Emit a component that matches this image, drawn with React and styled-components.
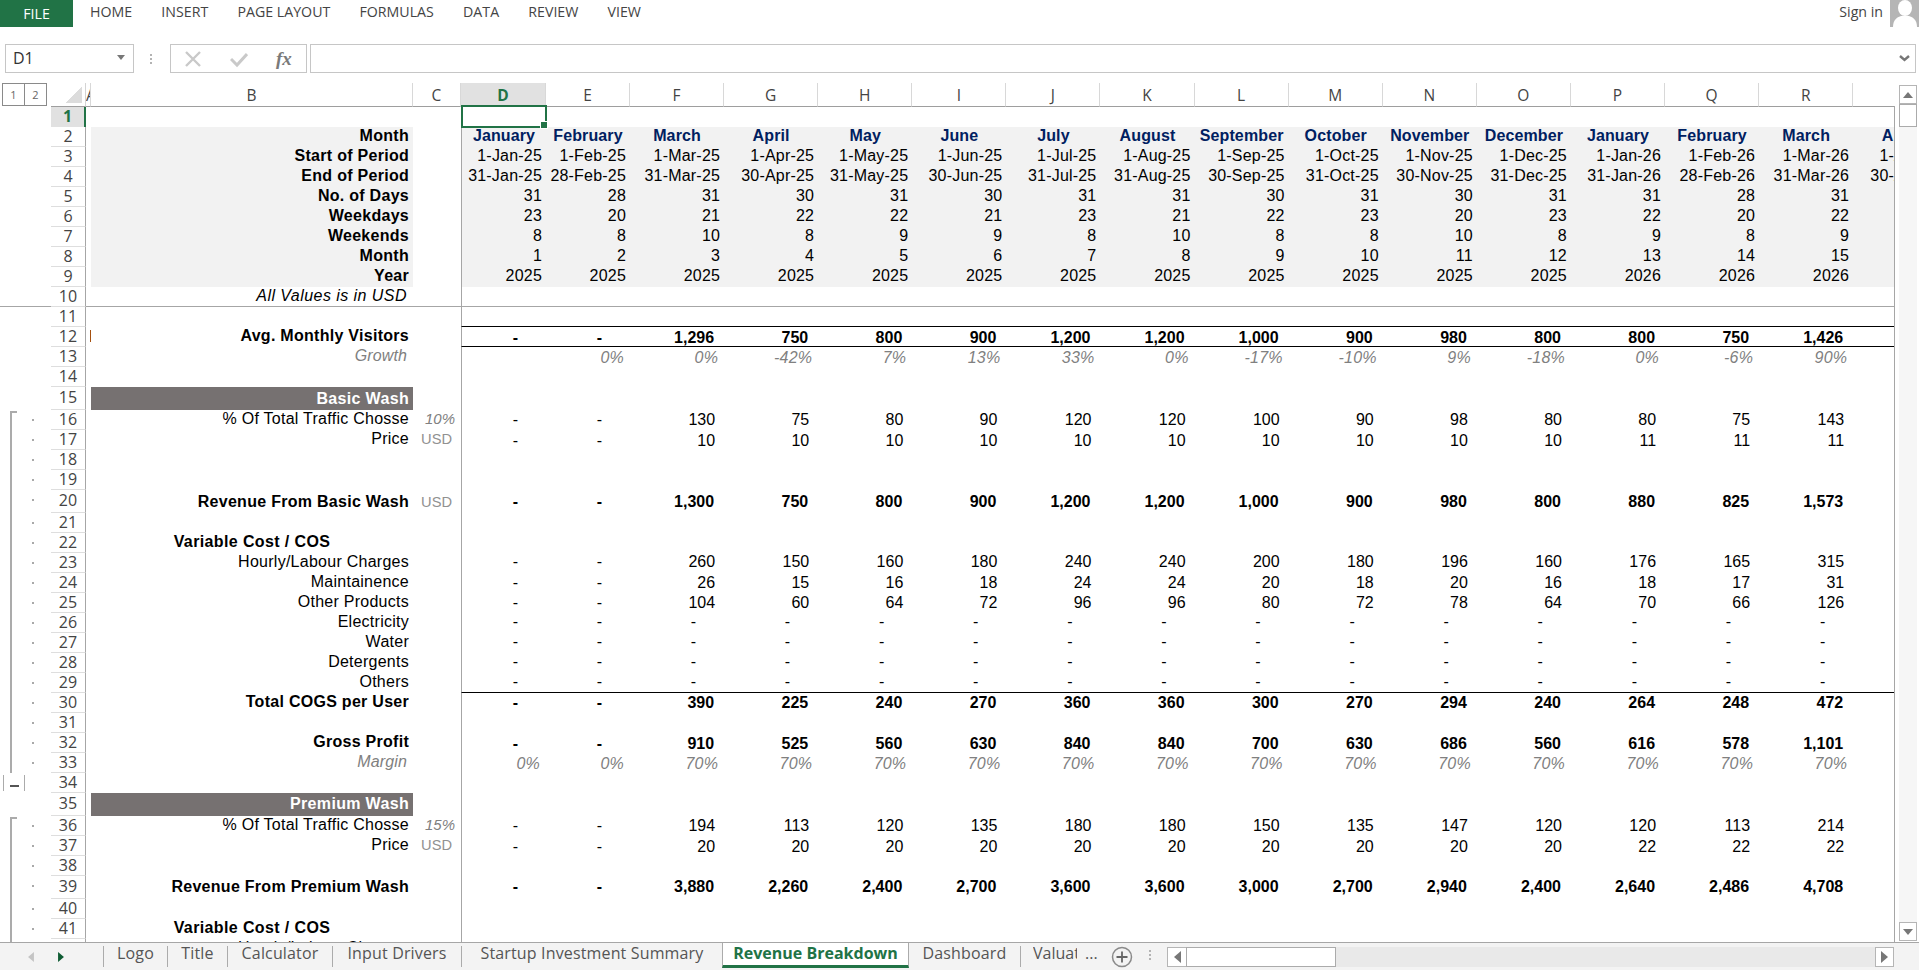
import React from 'react';
import styled, { createGlobalStyle, css } from 'styled-components';

const GlobalStyle = createGlobalStyle`
  html, body {
    margin: 0;
    padding: 0;
    height: 100%;
    background: #fff;
    overflow: hidden;
  }
  * {
    box-sizing: border-box;
  }
`;

const uiFont = `"Open Sans", "Noto Sans", sans-serif`;
const cellFont = `"Liberation Sans", Arial, sans-serif`;
const green = '#217346';
const lineGrey = '#a6a6a6';

const Page = styled.div`
  width: 1919px;
  height: 970px;
  display: flex;
  flex-direction: column;
  background: #fff;
  overflow: hidden;
`;

/* ribbon tabs */
const MenuBar = styled.div`
  height: 27px;
  display: flex;
  align-items: flex-start;
  font-family: ${uiFont};
  font-size: 14.2px;
  color: #444;
`;

const FileTab = styled.div`
  width: 73px;
  height: 27px;
  background: ${green};
  color: #fff;
  display: flex;
  align-items: center;
  justify-content: center;
  margin-right: 17px;
`;

const MenuItem = styled.div`
  line-height: 24px;
  margin-right: 29.2px;
`;

const SignIn = styled.div`
  margin-left: auto;
  display: flex;
  align-items: flex-start;
  gap: 7px;
  line-height: 24px;
`;

const Avatar = styled.svg`
  width: 29px;
  height: 27px;
  display: block;
`;

/* name box + formula bar */
const FormulaRow = styled.div`
  height: 29px;
  margin: 17px 3px 10px 5px;
  display: flex;
`;

const NameBox = styled.div`
  width: 129px;
  border: 1px solid #c6c6c6;
  display: flex;
  align-items: center;
  justify-content: space-between;
  padding: 0 8px 2px 7px;
  font-family: ${uiFont};
  font-size: 16px;
  color: #333;
`;

const Caret = styled.svg`
  width: 8px;
  height: 5px;
  display: block;
`;

const GripDots = styled.div`
  width: 3px;
  display: flex;
  flex-direction: column;
  justify-content: center;
  gap: 2px;
  margin: ${(p) => p.$margin};
  i {
    width: 2px;
    height: 2px;
    background: #b3b3b3;
    display: block;
  }
`;

const FormulaButtons = styled.div`
  width: 137px;
  border: 1px solid #c6c6c6;
  display: flex;
  align-items: center;
  padding-left: 13px;
`;

const BarIcon = styled.svg`
  width: 18px;
  height: 18px;
  margin-right: 28px;
  display: block;
`;

const FxLabel = styled.span`
  font-family: "Liberation Serif", serif;
  font-style: italic;
  font-weight: bold;
  font-size: 19px;
  color: #7a7a7a;
  line-height: 1;
`;

const FormulaInput = styled.div`
  flex: 1;
  margin-left: 3px;
  border: 1px solid #c6c6c6;
  display: flex;
  align-items: center;
  justify-content: flex-end;
  padding-right: 5px;
`;

/* sheet */
const SheetArea = styled.div`
  flex: 1;
  min-height: 0;
  display: flex;
`;

const GridPane = styled.div`
  width: 1895px;
  position: relative;
  overflow: hidden;
  &::after {
    content: '';
    position: absolute;
    top: 23px;
    right: 0;
    bottom: 0;
    width: 1px;
    background: ${lineGrey};
  }
`;

const trackSizes = '51px 35px 5px 322px 48px 85px 84px repeat(15, 94.1px)';

const HeaderRow = styled.div`
  display: grid;
  grid-template-columns: ${trackSizes};
  height: 24px;
  width: max-content;
  font-family: ${uiFont};
  font-size: 15.5px;
  color: #444;
`;

const OutlineLevels = styled.div`
  display: flex;
  padding: 0 0 1px 2px;
`;

const LevelButton = styled.div`
  width: 23px;
  height: 23px;
  border: 1px solid #8a8a8a;
  margin-right: -1px;
  display: flex;
  align-items: center;
  justify-content: center;
  font-size: 11px;
  color: #666;
`;

const Corner = styled.div`
  border-bottom: 1px solid #9e9e9e;
  border-right: 1px solid #d4d4d4;
  display: flex;
  align-items: flex-end;
  justify-content: flex-end;
  padding: 0 3px 3px 0;
`;

const CornerMark = styled.div`
  width: 16px;
  height: 16px;
  background: linear-gradient(135deg, transparent 50%, #dcdcdc 50%);
`;

const ColHead = styled.div`
  border-bottom: 1px solid #9e9e9e;
  border-right: 1px solid #d8d8d8;
  display: flex;
  align-items: center;
  justify-content: ${(p) => (p.$clip ? 'flex-start' : 'center')};
  overflow: hidden;
  ${(p) =>
    p.$active &&
    css`
      background: #e1e1e1;
      color: ${green};
      font-weight: 700;
    `}
`;

const Row = styled.div`
  display: grid;
  grid-template-columns: ${trackSizes};
  width: max-content;
  height: ${(p) => p.$h}px;
  font-family: ${cellFont};
  font-size: 16px;
  line-height: 16px;
  color: #000;
  ${(p) => p.$freeze && `border-bottom: 1px solid ${lineGrey};`}
`;

const Gutter = styled.div`
  display: flex;
  height: ${(p) => p.$h}px;
`;

const Bracket = styled.div`
  width: 7px;
  margin-left: 10px;
  border-left: 2px solid #ababab;
  ${(p) => p.$start && `border-top: 2px solid #ababab; margin-top: 1px;`}
`;

const OutlineDot = styled.div`
  width: 2px;
  height: 2px;
  background: #a9a9a9;
  margin: 9px 0 0 15px;
`;

const Collapse = styled.div`
  width: 22px;
  height: 16px;
  margin: 2px 0 0 3px;
  border-left: 1px solid #ababab;
  border-right: 1px solid #ababab;
  display: flex;
  align-items: flex-end;
  justify-content: center;
  padding-bottom: 4px;
  i {
    width: 9px;
    height: 2px;
    background: #555;
    display: block;
  }
`;

const RowNum = styled.div`
  font-family: ${uiFont};
  font-size: 16px;
  color: #444;
  border-right: 1px solid ${lineGrey};
  border-bottom: 1px solid #dedede;
  display: flex;
  align-items: center;
  justify-content: center;
  padding-bottom: 2px;
  ${(p) =>
    p.$active &&
    css`
      background: #e1e1e1;
      color: ${green};
      font-weight: 700;
      border-right: 2px solid ${green};
      border-bottom: none;
    `}
`;

const ColA = styled.div`
  display: flex;
  align-items: flex-start;
  justify-content: flex-end;
  padding: 3px 0 0 0;
`;

const Tick = styled.div`
  width: 1px;
  height: 12px;
  background: #a5500f;
`;

const labelVariants = {
  bold: css`
    font-weight: 700;
    letter-spacing: 0.28px;
    text-align: right;
    padding-right: 4px;
  `,
  center: css`
    font-weight: 700;
    letter-spacing: 0.38px;
    text-align: center;
  `,
  plain: css`
    letter-spacing: 0.26px;
    text-align: right;
    padding-right: 4px;
  `,
  note: css`
    font-style: italic;
    letter-spacing: 0.45px;
    text-align: right;
    padding-right: 6px;
  `,
  muted: css`
    font-style: italic;
    letter-spacing: 0.12px;
    color: #808080;
    text-align: right;
    padding-right: 6px;
  `,
  band: css`
    font-weight: 700;
    letter-spacing: 0.33px;
    color: #fff;
    background: #767171;
    text-align: right;
    padding-right: 4px;
  `,
};

const Label = styled.div`
  ${(p) => labelVariants[p.$kind || 'plain']}
  ${(p) => p.$panel && 'background: #f2f2f2;'}
  padding-top: ${(p) => p.$pad}px;
  white-space: nowrap;
`;

const Unit = styled.div`
  color: ${(p) => (p.$pct ? '#808080' : '#919191')};
  font-style: ${(p) => (p.$pct ? 'italic' : 'normal')};
  font-size: ${(p) => (p.$pct ? 15 : 14.67)}px;
  text-align: right;
  padding-right: ${(p) => (p.$pct ? 6 : 9)}px;
  padding-top: ${(p) => p.$pad}px;
`;

const valueVariants = {
  month: css`
    font-weight: 700;
    letter-spacing: 0.12px;
    color: #002060;
    text-align: center;
  `,
  plain: css`
    letter-spacing: 0.2px;
    text-align: right;
    padding-right: 4px;
  `,
  num: css`
    text-align: right;
    padding-right: 9px;
  `,
  bold: css`
    font-weight: 700;
    text-align: right;
    padding-right: 10px;
  `,
  pct: css`
    font-style: italic;
    letter-spacing: 0.2px;
    color: #808080;
    text-align: right;
    padding-right: 6px;
  `,
};

const Value = styled.div`
  ${(p) => valueVariants[p.$kind || 'plain']}
  ${(p) => p.$dash && 'padding-right: 28px;'}
  ${(p) => p.$panel && 'background: #f2f2f2;'}
  ${(p) => p.$rule && 'border-bottom: 1px solid #000;'}
  ${(p) => p.$first && `border-left: 1px solid ${lineGrey};`}
  padding-top: ${(p) => p.$pad}px;
  white-space: nowrap;
  overflow: hidden;
  position: relative;
  ${(p) => p.$selected && 'overflow: visible; z-index: 2;'}
`;

const Selection = styled.div`
  position: absolute;
  top: -2px;
  left: -1px;
  right: -1px;
  bottom: -1px;
  border: 2px solid ${green};
  &::after {
    content: '';
    position: absolute;
    right: -3px;
    bottom: -3px;
    width: 6px;
    height: 6px;
    background: ${green};
    border: 1px solid #fff;
  }
`;

/* scrollbars */
const VScroll = styled.div`
  flex: 1;
  display: flex;
  flex-direction: column;
  padding: 2px 2px 1px 4px;
  background: #fff;
`;

const VTrack = styled.div`
  flex: 1;
  display: flex;
  flex-direction: column;
  background: #f6f6f6;
`;

const ScrollBtn = styled.div`
  width: ${(p) => p.$w || 18}px;
  height: ${(p) => p.$h || 19}px;
  flex: none;
  background: #fff;
  border: 1px solid #b5b5b5;
  display: flex;
  align-items: center;
  justify-content: center;
  ${(p) => p.$end && 'margin-top: auto;'}
  ${(p) => p.$gapRight && 'margin-left: auto;'}
`;

const VThumb = styled.div`
  width: 18px;
  height: 23px;
  flex: none;
  background: #fff;
  border: 1px solid #ababab;
`;

/* bottom strip */
const TabBar = styled.div`
  height: 28px;
  flex: none;
  border-top: 1px solid ${lineGrey};
  background: #f3f3f3;
  display: flex;
  font-family: ${uiFont};
  font-size: 16px;
  color: #555;
`;

const TabNav = styled.div`
  width: 103px;
  height: 27px;
  display: flex;
  align-items: center;
  padding-left: 28px;
  gap: 24px;
`;

const Tab = styled.div`
  width: ${(p) => p.$w}px;
  height: 21px;
  display: flex;
  align-items: center;
  justify-content: center;
  padding-bottom: 8px;
  margin-top: 3px;
  border-left: 1px solid #ababab;
  white-space: nowrap;
  letter-spacing: 0.15px;
  ${(p) =>
    p.$active &&
    css`
      height: 25px;
      margin-top: 0;
      background: #fff;
      color: ${green};
      font-weight: 700;
      letter-spacing: 0;
      border-left: 1px solid #ababab;
      border-right: 1px solid #ababab;
      border-bottom: 3px solid ${green};
      padding-bottom: 3px;
    `}
  ${(p) => p.$afterActive && 'border-left: none;'}
`;

const ClippedTab = styled.div`
  width: 79px;
  height: 21px;
  margin-top: 3px;
  padding: 0 0 8px 12px;
  border-left: 1px solid #ababab;
  display: flex;
  align-items: center;
  white-space: nowrap;
`;

const TabName = styled.span`
  width: 44px;
  overflow: hidden;
  margin-right: 8px;
  flex: none;
`;

const AddSheet = styled.svg`
  width: 22px;
  height: 22px;
  margin: 3px 0 0 12px;
  flex: none;
  display: block;
`;

const HScroll = styled.div`
  width: 727px;
  height: 20px;
  margin: 4px 0 0 0;
  background: #e9e9e9;
  display: flex;
  flex: none;
`;

const HThumb = styled.div`
  width: 150px;
  background: #fff;
  border: 1px solid #ababab;
  margin-left: -1px;
`;

const Months = ['January', 'February', 'March', 'April', 'May', 'June', 'July', 'August', 'September', 'October', 'November', 'December', 'January', 'February', 'March', 'April'];
const Starts = ['1-Jan-25', '1-Feb-25', '1-Mar-25', '1-Apr-25', '1-May-25', '1-Jun-25', '1-Jul-25', '1-Aug-25', '1-Sep-25', '1-Oct-25', '1-Nov-25', '1-Dec-25', '1-Jan-26', '1-Feb-26', '1-Mar-26', '1-Apr-26'];
const Ends = ['31-Jan-25', '28-Feb-25', '31-Mar-25', '30-Apr-25', '31-May-25', '30-Jun-25', '31-Jul-25', '31-Aug-25', '30-Sep-25', '31-Oct-25', '30-Nov-25', '31-Dec-25', '31-Jan-26', '28-Feb-26', '31-Mar-26', '30-Apr-26'];

const nums = (s) => s.split(' ');
const dashes = nums('- - - - - - - - - - - - - - -');
const margin = nums('0% 0% 70% 70% 70% 70% 70% 70% 70% 70% 70% 70% 70% 70% 70%');

// every visible sheet row, top to bottom
const rows = [
  { n: 1, select: true },
  { n: 2, label: 'Month', lk: 'bold', panel: true, kind: 'month', values: Months },
  { n: 3, label: 'Start of Period', lk: 'bold', panel: true, values: Starts },
  { n: 4, label: 'End of Period', lk: 'bold', panel: true, values: Ends },
  { n: 5, label: 'No. of Days', lk: 'bold', panel: true, values: nums('31 28 31 30 31 30 31 31 30 31 30 31 31 28 31') },
  { n: 6, label: 'Weekdays', lk: 'bold', panel: true, values: nums('23 20 21 22 22 21 23 21 22 23 20 23 22 20 22') },
  { n: 7, label: 'Weekends', lk: 'bold', panel: true, values: nums('8 8 10 8 9 9 8 10 8 8 10 8 9 8 9') },
  { n: 8, label: 'Month', lk: 'bold', panel: true, values: nums('1 2 3 4 5 6 7 8 9 10 11 12 13 14 15') },
  { n: 9, label: 'Year', lk: 'bold', panel: true, values: nums('2025 2025 2025 2025 2025 2025 2025 2025 2025 2025 2025 2025 2026 2026 2026') },
  { n: 10, label: 'All Values is in USD', lk: 'note', freeze: true },
  { n: 11, rule: true },
  { n: 12, label: 'Avg. Monthly Visitors', lk: 'bold', kind: 'bold', rule: true, tick: true, vp: 3, values: nums('- - 1,296 750 800 900 1,200 1,200 1,000 900 980 800 800 750 1,426') },
  { n: 13, label: 'Growth', lk: 'muted', kind: 'pct', vp: 3, values: nums('. 0% 0% -42% 7% 13% 33% 0% -17% -10% 9% -18% 0% -6% 90%') },
  { n: 14 },
  { n: 15, h: 23, label: 'Basic Wash', lk: 'band', lp: 4 },
  { n: 16, label: '% Of Total Traffic Chosse', unit: '10%', pct: true, kind: 'num', vp: 2, group: 'start', values: nums('- - 130 75 80 90 120 120 100 90 98 80 80 75 143') },
  { n: 17, label: 'Price', unit: 'USD', kind: 'num', vp: 3, group: 'on', values: nums('- - 10 10 10 10 10 10 10 10 10 10 11 11 11') },
  { n: 18, group: 'on' },
  { n: 19, group: 'on' },
  { n: 20, h: 23, label: 'Revenue From Basic Wash', lk: 'bold', unit: 'USD', kind: 'bold', lp: 4, vp: 4, group: 'on', values: nums('- - 1,300 750 800 900 1,200 1,200 1,000 900 980 800 880 825 1,573') },
  { n: 21, group: 'on' },
  { n: 22, label: 'Variable Cost / COS', lk: 'center', group: 'on' },
  { n: 23, label: 'Hourly/Labour Charges', kind: 'num', vp: 1, group: 'on', values: nums('- - 260 150 160 180 240 240 200 180 196 160 176 165 315') },
  { n: 24, label: 'Maintainence', kind: 'num', vp: 2, group: 'on', values: nums('- - 26 15 16 18 24 24 20 18 20 16 18 17 31') },
  { n: 25, label: 'Other Products', kind: 'num', vp: 2, group: 'on', values: nums('- - 104 60 64 72 96 96 80 72 78 64 70 66 126') },
  { n: 26, label: 'Electricity', kind: 'num', vp: 1, group: 'on', values: dashes },
  { n: 27, label: 'Water', kind: 'num', vp: 1, group: 'on', values: dashes },
  { n: 28, label: 'Detergents', kind: 'num', vp: 1, group: 'on', values: dashes },
  { n: 29, label: 'Others', kind: 'num', vp: 1, group: 'on', rule: true, values: dashes },
  { n: 30, label: 'Total COGS per User', lk: 'bold', kind: 'bold', vp: 2, group: 'on', values: nums('- - 390 225 240 270 360 360 300 270 294 240 264 248 472') },
  { n: 31, group: 'on' },
  { n: 32, label: 'Gross Profit', lk: 'bold', kind: 'bold', vp: 3, group: 'on', values: nums('- - 910 525 560 630 840 840 700 630 686 560 616 578 1,101') },
  { n: 33, label: 'Margin', lk: 'muted', kind: 'pct', vp: 3, group: 'on', values: margin },
  { n: 34, group: 'collapse' },
  { n: 35, h: 23, label: 'Premium Wash', lk: 'band', lp: 3 },
  { n: 36, label: '% Of Total Traffic Chosse', unit: '15%', pct: true, kind: 'num', vp: 2, group: 'start', values: nums('- - 194 113 120 135 180 180 150 135 147 120 120 113 214') },
  { n: 37, label: 'Price', unit: 'USD', kind: 'num', vp: 3, group: 'on', values: nums('- - 20 20 20 20 20 20 20 20 20 20 22 22 22') },
  { n: 38, group: 'on' },
  { n: 39, h: 23, label: 'Revenue From Premium Wash', lk: 'bold', kind: 'bold', lp: 3, vp: 3, group: 'on', values: nums('- - 3,880 2,260 2,400 2,700 3,600 3,600 3,000 2,700 2,940 2,400 2,640 2,486 4,708') },
  { n: 40, group: 'on' },
  { n: 41, label: 'Variable Cost / COS', lk: 'center', group: 'on' },
  { n: 42, label: 'Hourly/Labour Charges', group: 'on' },
];

const colLetters = 'DEFGHIJKLMNOPQRS'.split('');

const Triangle = ({ dir, color = '#777', small }) => {
  const points = {
    up: '0,6 5,0 10,6',
    down: '0,0 10,0 5,6',
    left: '7,0 7,12 0,6',
    right: '0,0 7,6 0,12',
  };
  const vertical = dir === 'up' || dir === 'down';
  const w = vertical ? 10 : small ? 6 : 7;
  const h = vertical ? 6 : small ? 10 : 12;
  return (
    <svg width={w} height={h} viewBox={vertical ? '0 0 10 6' : '0 0 7 12'}>
      <polygon points={points[dir]} fill={color} />
    </svg>
  );
};

const OutlineCell = ({ group, h }) => {
  if (group === 'collapse') {
    return (
      <Gutter $h={h}>
        <Collapse>
          <i />
        </Collapse>
      </Gutter>
    );
  }
  if (!group) return <Gutter $h={h} />;
  return (
    <Gutter $h={h}>
      <Bracket $start={group === 'start'} />
      <OutlineDot />
    </Gutter>
  );
};

const SheetRow = ({ row }) => {
  const h = row.h || 20;
  const labelPad = row.lp ?? 1;
  const valuePad = row.vp ?? 1;
  return (
    <Row $h={h} $freeze={row.freeze}>
      <OutlineCell group={row.group} h={h} />
      <RowNum $active={row.select}>{row.n}</RowNum>
      <ColA>{row.tick && <Tick />}</ColA>
      <Label $kind={row.lk} $panel={row.panel} $pad={labelPad}>
        {row.label}
      </Label>
      <Unit $pct={row.pct} $pad={labelPad}>
        {row.unit}
      </Unit>
      {colLetters.map((letter, i) => {
        const v = row.values ? row.values[i] : undefined;
        const text = v === '.' ? '' : v;
        return (
          <Value
            key={letter}
            $kind={row.kind}
            $dash={text === '-'}
            $panel={row.panel}
            $rule={row.rule}
            $first={i === 0}
            $pad={valuePad}
            $selected={row.select && i === 0}
          >
            {text}
            {row.select && i === 0 && <Selection />}
          </Value>
        );
      })}
    </Row>
  );
};

const App = () => (
  <Page>
    <GlobalStyle />
    <MenuBar>
      <FileTab>FILE</FileTab>
      {['HOME', 'INSERT', 'PAGE LAYOUT', 'FORMULAS', 'DATA', 'REVIEW', 'VIEW'].map((item) => (
        <MenuItem key={item}>{item}</MenuItem>
      ))}
      <SignIn>
        Sign in
        <Avatar viewBox="0 0 29 27">
          <rect width="29" height="27" fill="#b5b5b5" />
          <ellipse cx="15" cy="8" rx="7" ry="8" fill="#fff" />
          <path d="M3 27c0-8 5-10 8-11h8c3 1 8 3 8 11z" fill="#fff" />
        </Avatar>
      </SignIn>
    </MenuBar>

    <FormulaRow>
      <NameBox>
        D1
        <Caret viewBox="0 0 8 5">
          <polygon points="0,0 8,0 4,5" fill="#777" />
        </Caret>
      </NameBox>
      <GripDots $margin="0 17px 0 16px">
        <i />
        <i />
        <i />
      </GripDots>
      <FormulaButtons>
        <BarIcon viewBox="0 0 18 18">
          <path d="M2 2l14 14M16 2L2 16" stroke="#c9c9c9" strokeWidth="2.4" fill="none" />
        </BarIcon>
        <BarIcon viewBox="0 0 18 18">
          <path d="M1 9l6 6L17 4" stroke="#c9c9c9" strokeWidth="3" fill="none" />
        </BarIcon>
        <FxLabel>fx</FxLabel>
      </FormulaButtons>
      <FormulaInput>
        <svg width="11" height="7" viewBox="0 0 11 7">
          <path d="M1 1l4.5 4L10 1" stroke="#777" strokeWidth="2.4" fill="none" />
        </svg>
      </FormulaInput>
    </FormulaRow>

    <SheetArea>
      <GridPane>
        <HeaderRow>
          <OutlineLevels>
            <LevelButton>1</LevelButton>
            <LevelButton>2</LevelButton>
          </OutlineLevels>
          <Corner>
            <CornerMark />
          </Corner>
          <ColHead $clip>A</ColHead>
          <ColHead>B</ColHead>
          <ColHead>C</ColHead>
          {colLetters.map((letter, i) => (
            <ColHead key={letter} $active={i === 0}>
              {letter}
            </ColHead>
          ))}
        </HeaderRow>
        {rows.map((row) => (
          <SheetRow key={row.n} row={row} />
        ))}
      </GridPane>
      <VScroll>
        <ScrollBtn>
          <Triangle dir="up" />
        </ScrollBtn>
        <VThumb />
        <VTrack>
          <ScrollBtn $end>
            <Triangle dir="down" />
          </ScrollBtn>
        </VTrack>
      </VScroll>
    </SheetArea>

    <TabBar>
      <TabNav>
        <Triangle dir="left" color="#c4c4c4" small />
        <Triangle dir="right" color="#0f5c33" small />
      </TabNav>
      <Tab $w={64}>Logo</Tab>
      <Tab $w={60}>Title</Tab>
      <Tab $w={105}>Calculator</Tab>
      <Tab $w={129}>Input Drivers</Tab>
      <Tab $w={261}>Startup Investment Summary</Tab>
      <Tab $w={187} $active>
        Revenue Breakdown
      </Tab>
      <Tab $w={111} $afterActive>
        Dashboard
      </Tab>
      <ClippedTab>
        <TabName>Valuation</TabName>...
      </ClippedTab>
      <AddSheet viewBox="0 0 22 22">
        <circle cx="11" cy="11" r="9.5" fill="none" stroke="#8a8a8a" strokeWidth="1.5" />
        <path d="M11 5.5v11M5.5 11h11" stroke="#666" strokeWidth="1.8" />
      </AddSheet>
      <GripDots $margin="-1px 15px 3px 16px">
        <i />
        <i />
        <i />
      </GripDots>
      <HScroll>
        <ScrollBtn $w={20} $h={20}>
          <Triangle dir="left" />
        </ScrollBtn>
        <HThumb />
        <ScrollBtn $w={19} $h={20} $gapRight>
          <Triangle dir="right" />
        </ScrollBtn>
      </HScroll>
    </TabBar>
  </Page>
);

export default App;
